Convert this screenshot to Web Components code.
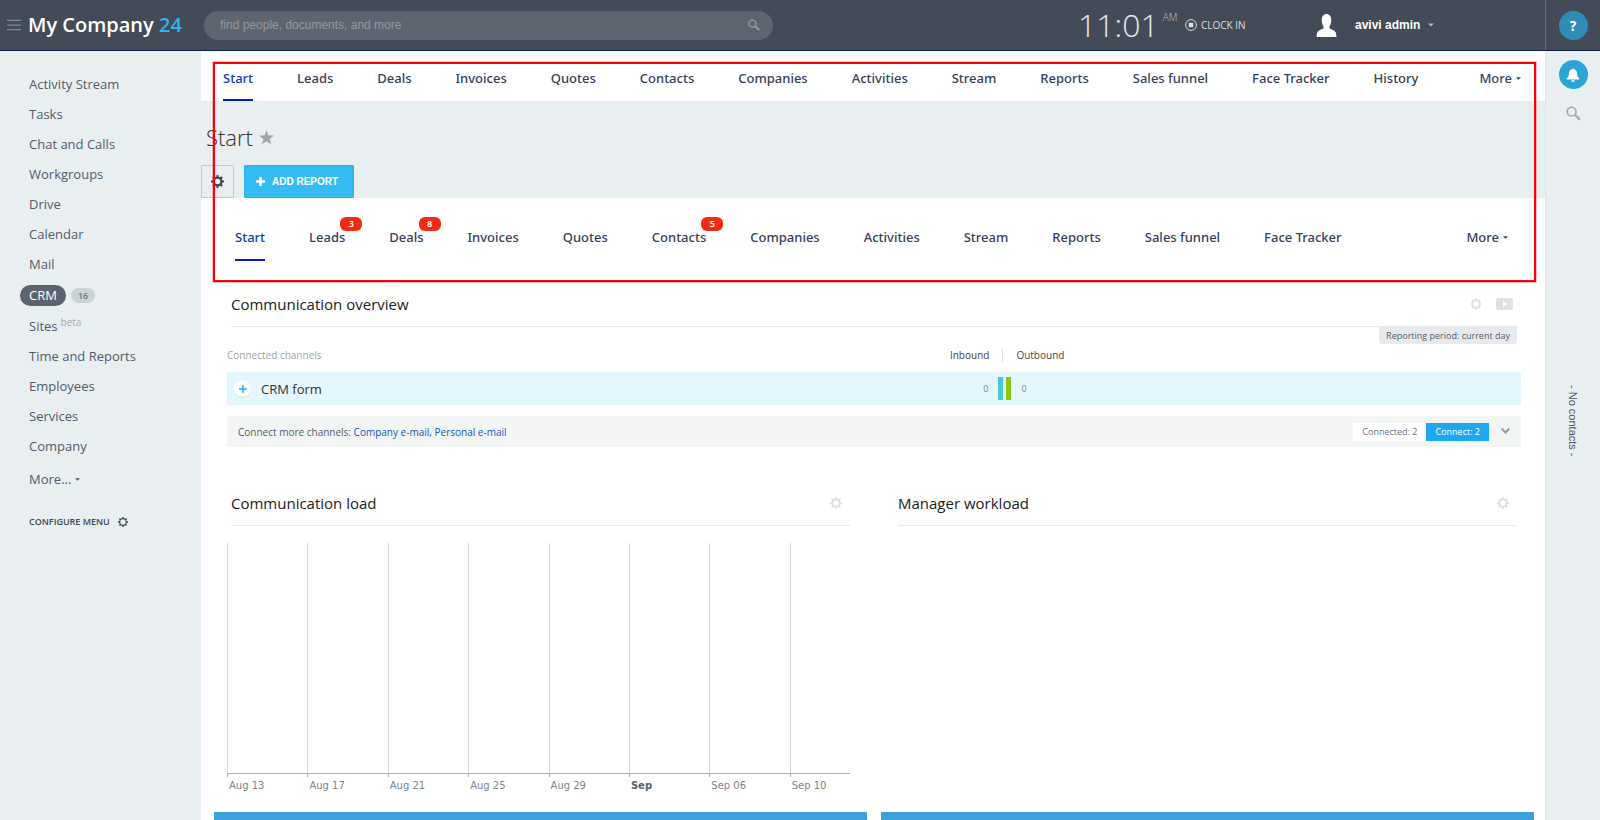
<!DOCTYPE html>
<html lang="en">
<head>
<meta charset="UTF-8">
<meta name="viewport" content="width=device-width, initial-scale=1">
<title>Start - My Company 24</title>
<style>
    body {
        margin: 0;
        font-family: "Open Sans", "Noto Sans", sans-serif;
        font-size: 13px;
        color: #333;
        background: #e9eef1;
    }
</style>
</head>
<body>
<crm-app>
    <app-header slot="header" company="My Company" suffix="24" time="11:01" period="AM" user="avivi admin"></app-header>

    <side-menu slot="menu">
        <menu-item>Activity Stream</menu-item>
        <menu-item>Tasks</menu-item>
        <menu-item>Chat and Calls</menu-item>
        <menu-item>Workgroups</menu-item>
        <menu-item>Drive</menu-item>
        <menu-item>Calendar</menu-item>
        <menu-item>Mail</menu-item>
        <menu-item active count="16">CRM</menu-item>
        <menu-item note="beta">Sites</menu-item>
        <menu-item>Time and Reports</menu-item>
        <menu-item>Employees</menu-item>
        <menu-item>Services</menu-item>
        <menu-item>Company</menu-item>
    </side-menu>

    <outline-frame>
        <tab-strip>
            <tab-item active>Start</tab-item>
            <tab-item>Leads</tab-item>
            <tab-item>Deals</tab-item>
            <tab-item>Invoices</tab-item>
            <tab-item>Quotes</tab-item>
            <tab-item>Contacts</tab-item>
            <tab-item>Companies</tab-item>
            <tab-item>Activities</tab-item>
            <tab-item>Stream</tab-item>
            <tab-item>Reports</tab-item>
            <tab-item>Sales funnel</tab-item>
            <tab-item>Face Tracker</tab-item>
            <tab-item>History</tab-item>
        </tab-strip>
        <page-title heading="Start" action="ADD REPORT"></page-title>
        <tab-strip roomy>
            <tab-item active>Start</tab-item>
            <tab-item count="3">Leads</tab-item>
            <tab-item count="8">Deals</tab-item>
            <tab-item>Invoices</tab-item>
            <tab-item>Quotes</tab-item>
            <tab-item count="5">Contacts</tab-item>
            <tab-item>Companies</tab-item>
            <tab-item>Activities</tab-item>
            <tab-item>Stream</tab-item>
            <tab-item>Reports</tab-item>
            <tab-item>Sales funnel</tab-item>
            <tab-item>Face Tracker</tab-item>
        </tab-strip>
    </outline-frame>

    <widget-grid>
        <report-widget wide video heading="Communication overview" period="Reporting period: current day">
            <channel-table></channel-table>
        </report-widget>
        <report-widget heading="Communication load">
            <load-chart labels="Aug 13,Aug 17,Aug 21,Aug 25,Aug 29,Sep,Sep 06,Sep 10" strong="Sep"></load-chart>
        </report-widget>
        <report-widget heading="Manager workload"></report-widget>
        <color-card></color-card>
        <color-card></color-card>
    </widget-grid>

    <side-rail slot="rail"></side-rail>
</crm-app>

<script>
const GEAR_OUTLINE = 'M7 0h2l.5 2.100 1.500.6L12.900 1.600l1.500 1.500L13.300 5l.6 1.500L16 7v2l-2.100.5-.6 1.500 1.100 1.900-1.500 1.500L11 13.300l-1.500.6L9 16H7l-.5-2.100L5 13.300l-1.900 1.100-1.500-1.500L2.700 11l-.6-1.500L0 9V7l2.100-.5L2.700 5 1.600 3.100l1.500-1.500L5 2.700l1.500-.6z';

const ICONS = {
    gear: `<path fill-rule="evenodd" d="${GEAR_OUTLINE}M8 4.600a3.400 3.400 0 1 0 0 6.800 3.400 3.400 0 0 0 0-6.800z"/>`,
    thingear: `<path fill-rule="evenodd" d="${GEAR_OUTLINE}M8 3.600a4.400 4.400 0 1 0 0 8.800 4.400 4.400 0 0 0 0-8.800z"/>`,
    burger: '<path d="M0 2h16v1.500H0zM0 7.300h16v1.500H0zM0 12.500h16V14H0z"/>',
    search: '<path fill-rule="evenodd" d="M6 .5a5.500 5.500 0 0 1 4.600 8.500l1 .7 4 4.100-1.700 1.700-4.100-4-.8-1A5.500 5.500 0 1 1 6 .5zm0 1.700a3.800 3.800 0 1 0 0 7.600 3.800 3.800 0 0 0 0-7.600z"/>',
    person: '<path d="M8 0c2 0 3.300 1.700 3.300 4.200 0 1.700-.4 3.300-1.200 4.200v1.500c.8.8 4 1.500 4.400 3.200.3.900.4 1.900.4 2.900H1.100c0-1 .1-2 .4-2.900.4-1.700 3.600-2.400 4.400-3.200V8.400C5.100 7.500 4.700 5.900 4.700 4.200 4.700 1.700 6 0 8 0z"/>',
    record: '<circle cx="8" cy="8" r="7.200" fill="none" stroke="currentColor" stroke-width="1.300"/><rect x="5" y="5" width="6" height="6" rx="1"/>',
    bell: '<path d="M7 1.500a1 1 0 0 1 2 0c2.500.5 3.600 2.300 3.700 4.500.1 3 .6 4.500 2.300 5.800v1.200H1v-1.200C2.700 10.500 3.200 9 3.300 6 3.400 3.800 4.500 2 7 1.500zM6 14h4a2 2 0 0 1-4 0z"/>',
    star: '<path d="M8 0l2 5.600 6 .2-4.700 3.700L13 15.300 8 11.900l-5 3.400 1.700-5.800L0 5.800l6-.2z"/>',
    plus: '<path d="M5.700 0h4.600v5.700H16v4.600h-5.700V16H5.700v-5.700H0V5.700h5.700z"/>',
    thinplus: '<path d="M6.500 0h3v6.500H16v3H9.500V16h-3V9.500H0v-3h6.500z"/>',
    caret: '<path d="M0 4h16l-8 8z"/>',
    chevron: '<path d="M0 4l2.500-2.500L8 7l5.500-5.500L16 4l-8 8.500z"/>'
};

/**
 * AppIcon
 * Square glyph, sized by the "size" attribute and coloured by its text colour.
 */
class AppIcon extends HTMLElement {
    constructor() {
        super();
        this.attachShadow({ mode: 'open' });
    }

    connectedCallback() {
        const size = this.getAttribute('size') || '16';
        this.shadowRoot.innerHTML = `
            <style>
                :host { display: inline-block; flex: none; width: ${size}px; height: ${size}px; }
                svg { display: block; width: 100%; height: 100%; fill: currentColor; }
            </style>
            <svg viewBox="0 0 16 16" aria-hidden="true">${ICONS[this.getAttribute('name')]}</svg>
        `;
    }
}

/**
 * CrmApp
 * Page shell: header on top, menu, scrolling content and the right rail below.
 */
class CrmApp extends HTMLElement {
    constructor() {
        super();
        this.attachShadow({ mode: 'open' }).innerHTML = `
            <style>
                :host {
                    display: grid;
                    grid-template: auto minmax(0, 1fr) / 201px minmax(0, 1fr) 55px;
                    height: 100vh;
                }
                slot[name="header"] { display: block; grid-column: 1 / -1; }
                main {
                    background: #fff;
                    overflow-y: auto;
                    scrollbar-width: none;
                }
            </style>
            <slot name="header"></slot>
            <slot name="menu"></slot>
            <main><slot></slot></main>
            <slot name="rail"></slot>
        `;
    }
}

class AppHeader extends HTMLElement {
    constructor() {
        super();
        this.attachShadow({ mode: 'open' });
    }

    connectedCallback() {
        const attr = name => this.getAttribute(name);
        this.shadowRoot.innerHTML = `
            <style>
                :host {
                    display: flex;
                    height: 50px;
                    background: #444b58;
                    border-bottom: 1px solid #0b2240;
                    color: #fff;
                }
                button {
                    border: 0;
                    padding: 0;
                    background: none;
                    color: inherit;
                    font: inherit;
                }
                .brand {
                    display: flex;
                    align-items: center;
                    flex: none;
                    gap: 7px;
                    width: 197px;
                    padding-left: 7px;
                }
                .burger { display: flex; color: #818791; }
                .brand a {
                    color: #fff;
                    font-size: 20px;
                    font-weight: 600;
                    line-height: 28px;
                    text-decoration: none;
                    white-space: nowrap;
                }
                .brand b { font-weight: 600; color: #2fb4ec; }
                .search {
                    display: flex;
                    align-items: center;
                    align-self: center;
                    box-sizing: border-box;
                    flex: 0 1 569px;
                    height: 29px;
                    padding: 0 13px 0 16px;
                    border-radius: 15px;
                    background: #5f6570;
                    color: #9298a1;
                }
                .search input {
                    flex: 1;
                    min-width: 0;
                    border: 0;
                    padding: 0;
                    outline: 0;
                    background: none;
                    color: #fff;
                    font: 12px "Liberation Sans", Arial, sans-serif;
                }
                .search input::placeholder { color: #9298a1; }
                .tools {
                    display: flex;
                    align-items: center;
                    box-sizing: border-box;
                    flex: none;
                    width: 467px;
                    margin-left: auto;
                }
                .clock {
                    display: flex;
                    align-items: center;
                    width: 107px;
                    gap: 4px;
                    color: #e6e8ea;
                    font-size: 32px;
                    font-weight: 300;
                    line-height: 48px;
                }
                .clock span { align-self: flex-start; font-size: 10px; line-height: 32px; color: #c0c3c8; }
                .clock-in { display: flex; align-items: center; gap: 4px; font-size: 10px; color: #dcdee1; width: 130px; }
                .user {
                    display: flex;
                    align-items: center;
                    gap: 8px;
                    font: bold 12px "Liberation Sans", Arial, sans-serif;
                }
                .user app-icon:first-child { margin-right: 9px; }
                .user app-icon:last-child { color: #b4b7bc; }
                .help {
                    display: flex;
                    align-items: center;
                    justify-content: center;
                    flex: none;
                    box-sizing: border-box;
                    width: 55px;
                    border-left: 1px solid #6b717b;
                }
                .help button {
                    width: 29px;
                    height: 29px;
                    border-radius: 50%;
                    background: #2f8cb5;
                    font-size: 14px;
                    font-weight: 700;
                }
            </style>
            <div class="brand">
                <button class="burger" aria-label="Toggle menu"><app-icon name="burger" size="14"></app-icon></button>
                <a href="#">${attr('company')} <b>${attr('suffix')}</b></a>
            </div>
            <label class="search">
                <input type="text" placeholder="find people, documents, and more" aria-label="Search">
                <app-icon name="search" size="12"></app-icon>
            </label>
            <div class="tools">
                <div class="clock">${attr('time')}<span>${attr('period')}</span></div>
                <button class="clock-in"><app-icon name="record" size="12"></app-icon>CLOCK IN</button>
                <button class="user">
                    <app-icon name="person" size="23"></app-icon>
                    ${attr('user')}
                    <app-icon name="caret" size="6"></app-icon>
                </button>
            </div>
            <div class="help"><button>?</button></div>
        `;
    }
}

class SideMenu extends HTMLElement {
    constructor() {
        super();
        this.attachShadow({ mode: 'open' }).innerHTML = `
            <style>
                :host {
                    display: flex;
                    flex-direction: column;
                    align-items: flex-start;
                    padding: 18px 0 0 29px;
                    color: #535c69;
                }
                nav { width: 100%; }
                button {
                    display: flex;
                    align-items: center;
                    border: 0;
                    padding: 0;
                    background: none;
                    color: inherit;
                    font: inherit;
                }
                .more { gap: 4px; height: 32px; margin-top: 2px; }
                .configure {
                    gap: 8px;
                    margin-top: 20px;
                    color: #3f4a58;
                    font-size: 9px;
                    font-weight: 600;
                    line-height: 14px;
                }
            </style>
            <nav><slot></slot></nav>
            <button class="more">More... <app-icon name="caret" size="5"></app-icon></button>
            <button class="configure">CONFIGURE MENU <app-icon name="thingear" size="10"></app-icon></button>
        `;
    }
}

class MenuItem extends HTMLElement {
    constructor() {
        super();
        this.attachShadow({ mode: 'open' });
    }

    connectedCallback() {
        const count = this.getAttribute('count');
        const note = this.getAttribute('note');
        this.shadowRoot.innerHTML = `
            <style>
                :host { display: flex; align-items: center; height: 30px; line-height: 21px; }
                :host([active]) { height: 32px; }
                a { color: inherit; text-decoration: none; }
                :host([active]) a {
                    margin-left: -9px;
                    padding: 0 9px;
                    border-radius: 11px;
                    background: #5b6370;
                    color: #fff;
                    font-weight: 500;
                }
                .count {
                    margin-left: 5px;
                    padding: 0 7px;
                    border-radius: 8px;
                    background: #ccd3d7;
                    color: #6b737e;
                    font-size: 9px;
                    font-weight: 600;
                    line-height: 15px;
                }
                .note { align-self: flex-start; margin-left: 3px; color: #a3a9b1; font-size: 10px; line-height: 23px; }
            </style>
            <a href="#"><slot></slot></a>
            ${count ? `<span class="count">${count}</span>` : ''}
            ${note ? `<span class="note">${note}</span>` : ''}
        `;
    }
}

/**
 * OutlineFrame
 * Red outline laid over the tabs and the page title.
 */
class OutlineFrame extends HTMLElement {
    constructor() {
        super();
        this.attachShadow({ mode: 'open' }).innerHTML = `
            <style>
                :host { display: block; position: relative; }
                :host::after {
                    content: "";
                    position: absolute;
                    inset: 11px 9px 0 12px;
                    border: 2px solid #fb0007;
                    box-shadow: 0 0 0 1px rgba(251, 0, 7, 0.25);
                    pointer-events: none;
                }
            </style>
            <slot></slot>
        `;
    }
}

class TabStrip extends HTMLElement {
    constructor() {
        super();
        this.attachShadow({ mode: 'open' }).innerHTML = `
            <style>
                :host {
                    display: flex;
                    gap: 44px;
                    height: 50px;
                    padding: 0 24px 0 22px;
                    background: #fff;
                    color: #35415a;
                    font-family: "Noto Sans", "Open Sans", sans-serif;
                    font-weight: 500;
                }
                :host([roomy]) { --tab-top: 28px; height: 63px; padding: 0 37px 21px 34px; }
                button {
                    display: flex;
                    align-items: center;
                    gap: 4px;
                    height: 54px;
                    margin-left: auto;
                    border: 0;
                    padding: 0;
                    background: none;
                    color: inherit;
                    font: inherit;
                }
                :host([roomy]) button { height: 78px; }
            </style>
            <slot></slot>
            <button>More <app-icon name="caret" size="5"></app-icon></button>
        `;
    }
}

class TabItem extends HTMLElement {
    constructor() {
        super();
        this.attachShadow({ mode: 'open' });
    }

    connectedCallback() {
        const count = this.getAttribute('count');
        this.shadowRoot.innerHTML = `
            <style>
                :host {
                    display: flex;
                    position: relative;
                    box-sizing: border-box;
                    padding-top: var(--tab-top, 16px);
                    line-height: 22px;
                    border-bottom: 2px solid transparent;
                    white-space: nowrap;
                }
                :host([active]) { border-color: #0a1bbb; color: #0b3cc4; }
                a { color: inherit; text-decoration: none; }
                .count {
                    position: absolute;
                    top: 19px;
                    right: -17px;
                    width: 22px;
                    border-radius: 6px;
                    background: #f12c12;
                    color: #fff;
                    font-size: 9px;
                    font-weight: 600;
                    line-height: 14px;
                    text-align: center;
                }
            </style>
            <a href="#"><slot></slot></a>
            ${count ? `<span class="count">${count}</span>` : ''}
        `;
    }
}

class PageTitle extends HTMLElement {
    constructor() {
        super();
        this.attachShadow({ mode: 'open' });
    }

    connectedCallback() {
        this.shadowRoot.innerHTML = `
            <style>
                :host { display: block; padding-top: 20px; background: #e9eef1; }
                .heading { display: flex; align-items: center; gap: 6px; padding-left: 5px; color: #a0a6af; }
                h1 { margin: 0; color: #333; font-size: 22px; font-weight: 300; line-height: 32px; }
                .actions { display: flex; gap: 10px; margin-top: 12px; }
                button {
                    display: flex;
                    align-items: center;
                    justify-content: center;
                    gap: 7px;
                    box-sizing: border-box;
                    height: 33px;
                    border-radius: 1px;
                    font: bold 10px "Liberation Sans", Arial, sans-serif;
                }
                .settings { width: 33px; padding: 0; border: 1px solid #c3c9cd; background: none; color: #3c4654; }
                .add { border: 1px solid #24b4f3; padding: 0 15px 0 11px; background: #34bcf2; color: #fff; }
            </style>
            <div class="heading">
                <h1>${this.getAttribute('heading')}</h1>
                <app-icon name="star" size="15"></app-icon>
            </div>
            <div class="actions">
                <button class="settings" aria-label="Settings"><app-icon name="gear" size="13"></app-icon></button>
                <button class="add"><app-icon name="plus" size="9"></app-icon>${this.getAttribute('action')}</button>
            </div>
        `;
    }
}

class WidgetGrid extends HTMLElement {
    constructor() {
        super();
        this.attachShadow({ mode: 'open' }).innerHTML = `
            <style>
                :host {
                    display: grid;
                    grid-template-columns: 1fr 1fr;
                    column-gap: 14px;
                    padding: 0 11px 0 13px;
                }
            </style>
            <slot></slot>
        `;
    }
}

class ReportWidget extends HTMLElement {
    constructor() {
        super();
        this.attachShadow({ mode: 'open' });
    }

    connectedCallback() {
        const period = this.getAttribute('period');
        this.shadowRoot.innerHTML = `
            <style>
                :host { display: block; min-width: 0; }
                :host([wide]) { grid-column: 1 / -1; }
                header {
                    display: flex;
                    align-items: center;
                    height: 44px;
                    margin: 0 17px;
                    padding-right: 8px;
                    border-bottom: 1px solid #e7e9ea;
                    color: #dfe1e6;
                }
                :host([video]) header { padding-right: 4px; }
                h2 { flex: 1; margin: 0; color: #222; font-size: 15px; font-weight: 400; }
                button { display: flex; border: 0; padding: 0; background: none; color: inherit; }
                .play {
                    align-items: center;
                    justify-content: center;
                    width: 17px;
                    height: 12px;
                    margin-left: 14px;
                    border-radius: 2px;
                    background: #dfe1e6;
                }
                .play::before {
                    content: "";
                    border: 3px solid transparent;
                    border-left: 4px solid #fff;
                    border-right: 0;
                }
                .period {
                    width: fit-content;
                    margin: 0 17px 0 auto;
                    padding: 0 7px;
                    border-radius: 0 0 3px 3px;
                    background: #e8e9ec;
                    color: #535c69;
                    font-size: 9px;
                    line-height: 17px;
                }
            </style>
            <header>
                <h2>${this.getAttribute('heading')}</h2>
                <button aria-label="Widget settings"><app-icon name="gear" size="12"></app-icon></button>
                ${this.hasAttribute('video') ? '<button class="play" aria-label="Watch video"></button>' : ''}
            </header>
            ${period ? `<div class="period">${period}</div>` : ''}
            <slot></slot>
        `;
    }
}

class ChannelTable extends HTMLElement {
    constructor() {
        super();
        this.attachShadow({ mode: 'open' }).innerHTML = `
            <style>
                :host { display: block; padding: 0 13px 34px 13px; }
                table { width: 100%; table-layout: fixed; border-collapse: collapse; }
                th {
                    box-sizing: border-box;
                    height: 28px;
                    padding: 5px 0 0;
                    color: #444;
                    font-size: 10px;
                    font-weight: 400;
                    line-height: 13px;
                    text-align: left;
                    vertical-align: top;
                }
                th:first-child { width: 52%; color: #a0a4aa; }
                th:nth-child(2) { width: 8%; text-align: right; }
                th span { display: inline-block; padding: 0 13px; }
                th:nth-child(2) span { border-right: 1px solid #dde0e2; }
                td { height: 33px; padding: 0; background: #e5f7fe; }
                .name { display: flex; align-items: center; gap: 10px; padding-left: 7px; color: #333; }
                .name button {
                    display: flex;
                    align-items: center;
                    justify-content: center;
                    width: 17px;
                    height: 17px;
                    border: 0;
                    border-radius: 50%;
                    padding: 0;
                    background: #fff;
                    box-shadow: 0 1px 1px #cfe3ea;
                    color: #1ab2f0;
                }
                .value { display: flex; align-items: center; gap: 10px; color: #80868e; font-size: 9px; }
                .value i { width: 5px; height: 23px; background: #47c9dc; }
                .in { justify-content: flex-end; }
                .out { padding-left: 3px; }
                .out i { background: #8fc60b; }
                .connect {
                    display: flex;
                    align-items: center;
                    height: 31px;
                    margin-top: 11px;
                    padding: 0 11px;
                    background: #f3f5f5;
                    color: #535c69;
                    font-size: 10px;
                }
                .connect p { flex: 1; margin: 0; }
                .connect a { color: #1157c2; text-decoration: none; }
                .connect button {
                    height: 18px;
                    border: 0;
                    padding: 0 9px;
                    background: #fff;
                    color: #676f7b;
                    font: 9px "Open Sans", "Noto Sans", sans-serif;
                }
                .connect .blue { background: #1fa8f2; color: #fff; }
                .connect .toggle { display: flex; align-items: center; padding: 0; margin-left: 12px; background: none; color: #959ba3; }
            </style>
            <table>
                <thead>
                    <tr><th>Connected channels</th><th><span>Inbound</span></th><th><span>Outbound</span></th></tr>
                </thead>
                <tbody>
                    <tr>
                        <td><div class="name"><button aria-label="Expand CRM form"><app-icon name="thinplus" size="8"></app-icon></button>CRM form</div></td>
                        <td><div class="value in">0<i></i></div></td>
                        <td><div class="value out"><i></i>0</div></td>
                    </tr>
                </tbody>
            </table>
            <div class="connect">
                <p>Connect more channels: <a href="#">Company e-mail,</a> <a href="#">Personal e-mail</a></p>
                <button>Connected: 2</button>
                <button class="blue">Connect: 2</button>
                <button class="toggle" aria-label="Show all"><app-icon name="chevron" size="9"></app-icon></button>
            </div>
        `;
    }
}

/**
 * LoadChart
 * Empty time chart: one gridline per label, four days apart.
 */
class LoadChart extends HTMLElement {
    constructor() {
        super();
        this.attachShadow({ mode: 'open' });
    }

    connectedCallback() {
        const strong = this.getAttribute('strong');
        const ticks = this.getAttribute('labels').split(',').map(label =>
            `<li><span></span>${label === strong ? `<b>${label}</b>` : label}</li>`
        ).join('');

        this.shadowRoot.innerHTML = `
            <style>
                :host { display: block; padding: 17px 17px 18px 13px; }
                ul {
                    display: grid;
                    grid-template-columns: repeat(7, 4fr) 3fr;
                    margin: 0;
                    padding: 0;
                    list-style: none;
                    color: #7c848e;
                    font: 10px/16px "DejaVu Sans", Verdana, sans-serif;
                }
                li { min-width: 0; padding-left: 2px; white-space: nowrap; }
                li span {
                    display: flex;
                    height: 230px;
                    margin: 0 0 4px -2px;
                    border-bottom: 1px solid #a9b0b8;
                }
                /* gridline, with its tick below the axis */
                li span::before {
                    content: "";
                    flex: none;
                    width: 1px;
                    height: 234px;
                    background: linear-gradient(#d6d8da 230px, #a9b0b8 230px);
                }
                b { color: #5b6470; }
            </style>
            <ul>${ticks}</ul>
        `;
    }
}

class ColorCard extends HTMLElement {
    constructor() {
        super();
        this.attachShadow({ mode: 'open' }).innerHTML = `
            <style>
                :host { display: block; height: 40px; border-radius: 1px; background: #3aa1dd; }
            </style>
        `;
    }
}

class SideRail extends HTMLElement {
    constructor() {
        super();
        this.attachShadow({ mode: 'open' }).innerHTML = `
            <style>
                :host {
                    display: flex;
                    flex-direction: column;
                    align-items: center;
                    padding-top: 9px;
                    border-left: 1px solid #dfe4e8;
                    color: #a3a9b0;
                }
                button { display: flex; align-items: center; justify-content: center; border: 0; padding: 0; background: none; color: inherit; }
                .bell { width: 29px; height: 29px; border-radius: 50%; background: #2aa5d8; color: #fff; }
                .search { margin-top: 17px; }
                p {
                    margin: 264px 0 0;
                    color: #50565e;
                    font: 11px/16px "Liberation Sans", Arial, sans-serif;
                    writing-mode: vertical-rl;
                }
            </style>
            <button class="bell" aria-label="Notifications"><app-icon name="bell" size="14"></app-icon></button>
            <button class="search" aria-label="Search contacts"><app-icon name="search" size="15"></app-icon></button>
            <p>- No contacts -</p>
        `;
    }
}

// Register Custom Elements
customElements.define('app-icon', AppIcon);
customElements.define('crm-app', CrmApp);
customElements.define('app-header', AppHeader);
customElements.define('side-menu', SideMenu);
customElements.define('menu-item', MenuItem);
customElements.define('outline-frame', OutlineFrame);
customElements.define('tab-strip', TabStrip);
customElements.define('tab-item', TabItem);
customElements.define('page-title', PageTitle);
customElements.define('widget-grid', WidgetGrid);
customElements.define('report-widget', ReportWidget);
customElements.define('channel-table', ChannelTable);
customElements.define('load-chart', LoadChart);
customElements.define('color-card', ColorCard);
customElements.define('side-rail', SideRail);
</script>
</body>
</html>
